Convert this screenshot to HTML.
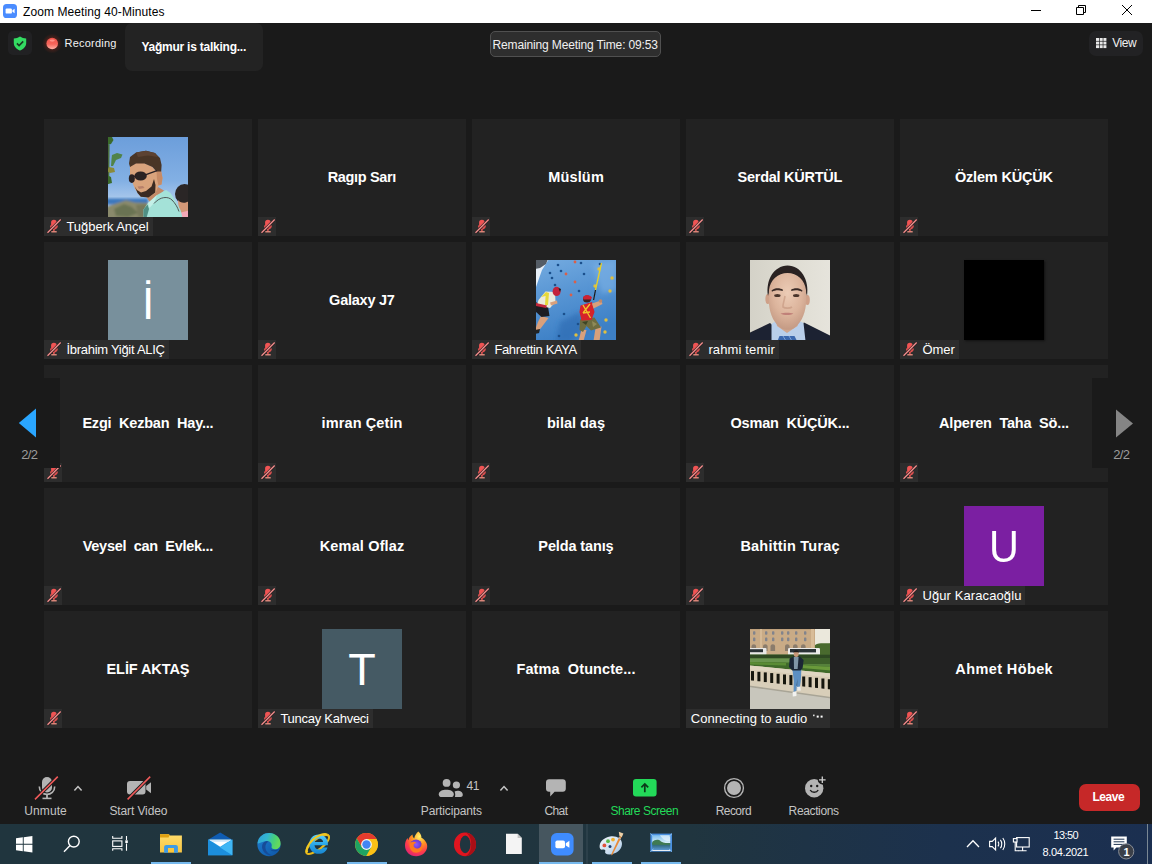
<!DOCTYPE html>
<html lang="tr"><head><meta charset="utf-8"><title>Zoom Meeting 40-Minutes</title>
<style>
html,body{margin:0;padding:0;background:#1a1a1a;}
body{width:1152px;height:864px;position:relative;overflow:hidden;font-family:"Liberation Sans",sans-serif;}
.t{position:absolute;white-space:pre;margin:0;padding:0;}
.a{position:absolute;}
.tile{position:absolute;width:208px;height:117px;background:#222;}
.lab{position:absolute;height:19.5px;background:#2d2d2d;}
svg{position:absolute;overflow:visible;}
</style></head><body>
<div class="a" style="left:0;top:0;width:1152px;height:23px;background:#fff"></div>
<svg style="left:3px;top:4px" width="14" height="14" viewBox="0 0 14 14"><rect width="14" height="14" rx="3.6" fill="#4a8cff"/><rect x="2.6" y="4.4" width="6.3" height="5.2" rx="1.2" fill="#fff"/><path d="M9.4 6.3 L11.6 4.7 V9.3 L9.4 7.7Z" fill="#fff"/></svg>
<div class="t" style="left:23.00px;top:5px;font-size:12px;line-height:14px;color:#000;letter-spacing:0.096px;">Zoom Meeting 40-Minutes</div>
<svg style="left:1020px;top:0" width="132" height="23" viewBox="0 0 132 23" fill="none" stroke="#000" stroke-width="1">
<path d="M11 10.5H21"/>
<path d="M56.5 7.5h7v7h-7zM58.5 7.5v-2h7v7h-2"/>
<path d="M102 5L112 15M112 5L102 15"/></svg>
<div class="a" style="left:8px;top:31px;width:24px;height:24px;border-radius:5px;background:#212123"></div>
<svg style="left:13px;top:36px" width="14" height="15" viewBox="0 0 14 15"><path d="M7 0.6 C5.2 1.9 3 2.5 0.8 2.6 V7 C0.8 10.6 3.5 13.2 7 14.4 C10.5 13.2 13.2 10.6 13.2 7 V2.6 C11 2.5 8.8 1.9 7 0.6Z" fill="#33db62"/><path d="M3.9 7.4 L6.1 9.6 L10.2 5.4" fill="none" stroke="#1a3a22" stroke-width="1.6"/></svg>
<svg style="left:40px;top:31px" width="24" height="24" viewBox="0 0 24 24"><defs><radialGradient id="rg" cx="50%" cy="50%" r="50%"><stop offset="0" stop-color="#c0392b" stop-opacity=".55"/><stop offset=".6" stop-color="#8a2a1c" stop-opacity=".35"/><stop offset="1" stop-color="#8a2a1c" stop-opacity="0"/></radialGradient><linearGradient id="rd" x1="0" y1="0" x2="0" y2="1"><stop offset="0" stop-color="#f0524a"/><stop offset=".55" stop-color="#f5655a"/><stop offset="1" stop-color="#ffb4a8"/></linearGradient></defs><circle cx="12.2" cy="12.5" r="10" fill="url(#rg)"/><circle cx="12.2" cy="12.5" r="5.8" fill="url(#rd)"/><ellipse cx="12.2" cy="9.6" rx="2.6" ry="1.1" fill="#ff9d92" opacity=".8"/></svg>
<div class="t" style="left:64.60px;top:37px;font-size:11px;line-height:12px;color:#f2f2f2;letter-spacing:0.207px;">Recording</div>
<div class="a" style="left:125px;top:23px;width:138px;height:48px;border-radius:7px;background:#232323"></div>
<div class="t" style="left:141.40px;top:40px;font-size:12px;line-height:14px;font-weight:bold;color:#fff;letter-spacing:-0.235px;">Yağmur is talking...</div>
<div class="a" style="left:490px;top:31px;width:169px;height:24px;border:1px solid #505050;border-radius:5px;background:#2e2e2e"></div>
<div class="t" style="left:492.50px;top:38px;font-size:12px;line-height:14px;color:#f0f0f0;letter-spacing:-0.140px;">Remaining Meeting Time: 09:53</div>
<div class="a" style="left:1089px;top:31px;width:54px;height:25px;border-radius:7px;background:#222224"></div>
<svg style="left:1095.6px;top:38px" width="11" height="11" viewBox="0 0 11 11"><rect x="0.0" y="0.0" width="3" height="2.9" fill="#e8e8e8"/><rect x="3.7" y="0.0" width="3" height="2.9" fill="#e8e8e8"/><rect x="7.4" y="0.0" width="3" height="2.9" fill="#e8e8e8"/><rect x="0.0" y="3.6" width="3" height="2.9" fill="#e8e8e8"/><rect x="3.7" y="3.6" width="3" height="2.9" fill="#e8e8e8"/><rect x="7.4" y="3.6" width="3" height="2.9" fill="#e8e8e8"/><rect x="0.0" y="7.2" width="3" height="2.9" fill="#e8e8e8"/><rect x="3.7" y="7.2" width="3" height="2.9" fill="#e8e8e8"/><rect x="7.4" y="7.2" width="3" height="2.9" fill="#e8e8e8"/></svg>
<div class="t" style="left:1112.30px;top:36px;font-size:12px;line-height:14px;color:#f0f0f0;letter-spacing:-0.498px;">View</div>
<div class="tile" style="left:44px;top:119px"></div>
<svg style="left:108px;top:137px" width="80" height="80" viewBox="0 0 80 80"><defs><filter id="b1" x="-5%" y="-5%" width="110%" height="110%"><feGaussianBlur stdDeviation="0.55"/></filter><filter id="b1b" x="-5%" y="-5%" width="110%" height="110%"><feGaussianBlur stdDeviation="1.2"/></filter><linearGradient id="sky1" x1="0" y1="0" x2="0" y2="1"><stop offset="0" stop-color="#6c9edb"/><stop offset=".55" stop-color="#83b0e4"/><stop offset=".78" stop-color="#a9c8ec"/><stop offset="1" stop-color="#a9c8ec"/></linearGradient><clipPath id="c1"><rect width="80" height="80"/></clipPath></defs><g clip-path="url(#c1)"><rect width="80" height="80" fill="url(#sky1)"/><g filter="url(#b1b)"><rect x="-2" y="61.5" width="42" height="6" fill="#3d78bd"/><path d="M-2 70 L8 66.5 L18 63.2 L27 65.4 L40 66 V82 H-2Z" fill="#8a8a6c"/><path d="M6 72 L16 67 L24 70 L30 76 L20 80 L8 79Z" fill="#6b7352"/><path d="M28 68 L38 67 L38 80 L30 80Z" fill="#77795c"/></g><g filter="url(#b1)"><path d="M-1 0 H4 L5.5 3 L3 7 L0 8Z" fill="#3b6b2c"/><path d="M1.6 8 L1.2 47 L0 47 L0 8Z" fill="#4a6a3a"/><path d="M4 18 L9 16 L14.5 17.5 L13 21 L8 23 L5 29 L3 29 L3.5 22Z" fill="#4d8038" opacity=".9"/><path d="M1 30 L6 31 L7 35 L2 36 L-1 34Z" fill="#8a8a3a"/><path d="M-1 38 L3 40 L4 46 L0 47Z" fill="#3b6b2c"/><ellipse cx="76.5" cy="57" rx="9.5" ry="10" fill="#2b2525"/><path d="M70 63 C72 66 77 67 81 64 V76 H73 C71 72 70 68 70 63Z" fill="#d39878"/><path d="M73 75.5 L81 73.5 V81 H74Z" fill="#f3a9b8"/><path d="M37 58 L50 50 L56 53.5 L43 67Z" fill="#c48a68"/><path d="M35.5 81 V72.5 L40 66 L49 58 L58 53 L62.5 56 L67 63 L72.5 73 L74.5 81Z" fill="#a4e2d8"/><path d="M35.5 81 V72.5 L39.5 67.5 L41 72 L38.5 81Z" fill="#4f8f84"/><path d="M40 66 L49 58 L46 66 L41.5 71Z" fill="#c4f0e8"/><path d="M46 66.5 C52 59.5 60 59 64 63 C67 66 69.5 70 71 74.5" fill="none" stroke="#4f5a5a" stroke-width="1"/><path d="M22 29 L28 26 L36 26 L44 29.5 L48 34 L53 34 L54.5 41 L53.5 47.5 L50.5 48.5 L47.5 56 L40.5 60.5 L32.5 59.5 L27 52 L24 44.5 L22 38Z" fill="#d9a37c"/><path d="M48.5 34 L53.2 34 L54.5 41 L53.5 47.5 L50.5 48.5 L49 42Z" fill="#c68b66"/><path d="M21 26.5 L22 20 L28 15.5 L38 13.8 L47 16 L52 21 L53.6 28 L53.2 34.5 L48.5 34.5 L44.5 30 L36.5 26.5 L28 26.5 L22 30Z" fill="#4a3527"/><path d="M28 15.5 L38 13.8 L47 16 L50 20 L40 18.5 L30 20Z" fill="#5c4230"/><path d="M26.8 49.5 L29 53 L33 55.5 L38 54 L43.5 49.5 L46 42 L47.5 48 L47.2 55.5 L40.5 60.5 L32.8 59.8 L29.5 56Z" fill="#3a2a20"/><path d="M29.5 49.5 L35 49 L36.5 51 L31 52Z" fill="#b8806a"/><ellipse cx="23.8" cy="41.6" rx="3" ry="4.4" fill="#2a2024"/><ellipse cx="32.6" cy="39" rx="6.2" ry="4.6" fill="#2a2024"/><path d="M38 37.6 L49 33.6" stroke="#2a2024" stroke-width="1.5"/><path d="M26 39.6 L27.4 39" stroke="#2a2024" stroke-width="1.2"/></g></g></svg>
<div class="lab" style="left:44px;top:216.5px;width:108.6px"></div>
<svg style="left:44.4px;top:216.6px" width="18" height="19" viewBox="0 0 18 19"><rect x="7.1" y="2.7" width="5.6" height="8.6" rx="2.8" fill="#f05454"/><path d="M6.5 8.4 C6.5 13.4 13.3 13.4 13.3 8.4" fill="none" stroke="#f05454" stroke-width="1.1"/><path d="M9.9 12 V14.3" stroke="#f05454" stroke-width="1.4"/><path d="M7.3 14.8 H12.7" stroke="#ff9a8a" stroke-width="1.2"/><path d="M3.4 16 L16.8 2.4" stroke="#2a2020" stroke-width="2.6"/><path d="M3.5 15.7 L16.7 2.5" stroke="#f69090" stroke-width="1.25"/></svg>
<div class="t" style="left:66.40px;top:219px;font-size:13px;line-height:15px;color:#fff;letter-spacing:-0.035px;">Tuğberk Ançel</div>
<div class="tile" style="left:258px;top:119px"></div>
<div class="t" style="left:327.65px;top:169px;font-size:14.5px;line-height:16px;font-weight:bold;color:#fff;letter-spacing:-0.335px;">Ragıp Sarı</div>
<div class="lab" style="left:258px;top:216.5px;width:18px"></div>
<svg style="left:258.4px;top:216.6px" width="18" height="19" viewBox="0 0 18 19"><rect x="7.1" y="2.7" width="5.6" height="8.6" rx="2.8" fill="#f05454"/><path d="M6.5 8.4 C6.5 13.4 13.3 13.4 13.3 8.4" fill="none" stroke="#f05454" stroke-width="1.1"/><path d="M9.9 12 V14.3" stroke="#f05454" stroke-width="1.4"/><path d="M7.3 14.8 H12.7" stroke="#ff9a8a" stroke-width="1.2"/><path d="M3.4 16 L16.8 2.4" stroke="#2a2020" stroke-width="2.6"/><path d="M3.5 15.7 L16.7 2.5" stroke="#f69090" stroke-width="1.25"/></svg>
<div class="tile" style="left:472px;top:119px"></div>
<div class="t" style="left:548.20px;top:169px;font-size:14.5px;line-height:16px;font-weight:bold;color:#fff;letter-spacing:0.164px;">Müslüm</div>
<div class="lab" style="left:472px;top:216.5px;width:18px"></div>
<svg style="left:472.4px;top:216.6px" width="18" height="19" viewBox="0 0 18 19"><rect x="7.1" y="2.7" width="5.6" height="8.6" rx="2.8" fill="#f05454"/><path d="M6.5 8.4 C6.5 13.4 13.3 13.4 13.3 8.4" fill="none" stroke="#f05454" stroke-width="1.1"/><path d="M9.9 12 V14.3" stroke="#f05454" stroke-width="1.4"/><path d="M7.3 14.8 H12.7" stroke="#ff9a8a" stroke-width="1.2"/><path d="M3.4 16 L16.8 2.4" stroke="#2a2020" stroke-width="2.6"/><path d="M3.5 15.7 L16.7 2.5" stroke="#f69090" stroke-width="1.25"/></svg>
<div class="tile" style="left:686px;top:119px"></div>
<div class="t" style="left:737.55px;top:169px;font-size:14.5px;line-height:16px;font-weight:bold;color:#fff;letter-spacing:-0.255px;">Serdal KÜRTÜL</div>
<div class="lab" style="left:686px;top:216.5px;width:18px"></div>
<svg style="left:686.4px;top:216.6px" width="18" height="19" viewBox="0 0 18 19"><rect x="7.1" y="2.7" width="5.6" height="8.6" rx="2.8" fill="#f05454"/><path d="M6.5 8.4 C6.5 13.4 13.3 13.4 13.3 8.4" fill="none" stroke="#f05454" stroke-width="1.1"/><path d="M9.9 12 V14.3" stroke="#f05454" stroke-width="1.4"/><path d="M7.3 14.8 H12.7" stroke="#ff9a8a" stroke-width="1.2"/><path d="M3.4 16 L16.8 2.4" stroke="#2a2020" stroke-width="2.6"/><path d="M3.5 15.7 L16.7 2.5" stroke="#f69090" stroke-width="1.25"/></svg>
<div class="tile" style="left:900px;top:119px"></div>
<div class="t" style="left:954.90px;top:169px;font-size:14.5px;line-height:16px;font-weight:bold;color:#fff;letter-spacing:-0.170px;">Özlem KÜÇÜK</div>
<div class="lab" style="left:900px;top:216.5px;width:18px"></div>
<svg style="left:900.4px;top:216.6px" width="18" height="19" viewBox="0 0 18 19"><rect x="7.1" y="2.7" width="5.6" height="8.6" rx="2.8" fill="#f05454"/><path d="M6.5 8.4 C6.5 13.4 13.3 13.4 13.3 8.4" fill="none" stroke="#f05454" stroke-width="1.1"/><path d="M9.9 12 V14.3" stroke="#f05454" stroke-width="1.4"/><path d="M7.3 14.8 H12.7" stroke="#ff9a8a" stroke-width="1.2"/><path d="M3.4 16 L16.8 2.4" stroke="#2a2020" stroke-width="2.6"/><path d="M3.5 15.7 L16.7 2.5" stroke="#f69090" stroke-width="1.25"/></svg>
<div class="tile" style="left:44px;top:242px"></div>
<div class="a" style="left:108px;top:260px;width:80px;height:80px;background:#78909c"></div>
<div class="t" style="left:108px;top:280.3px;width:80px;text-align:center;font-size:44px;line-height:48px;color:#fff">İ</div>
<div class="lab" style="left:44px;top:339.5px;width:125.0px"></div>
<svg style="left:44.4px;top:339.6px" width="18" height="19" viewBox="0 0 18 19"><rect x="7.1" y="2.7" width="5.6" height="8.6" rx="2.8" fill="#f05454"/><path d="M6.5 8.4 C6.5 13.4 13.3 13.4 13.3 8.4" fill="none" stroke="#f05454" stroke-width="1.1"/><path d="M9.9 12 V14.3" stroke="#f05454" stroke-width="1.4"/><path d="M7.3 14.8 H12.7" stroke="#ff9a8a" stroke-width="1.2"/><path d="M3.4 16 L16.8 2.4" stroke="#2a2020" stroke-width="2.6"/><path d="M3.5 15.7 L16.7 2.5" stroke="#f69090" stroke-width="1.25"/></svg>
<div class="t" style="left:66.40px;top:342px;font-size:13px;line-height:15px;color:#fff;letter-spacing:-0.278px;">İbrahim Yiğit ALIÇ</div>
<div class="tile" style="left:258px;top:242px"></div>
<div class="t" style="left:329.10px;top:292px;font-size:14.5px;line-height:16px;font-weight:bold;color:#fff;letter-spacing:-0.240px;">Galaxy J7</div>
<div class="lab" style="left:258px;top:339.5px;width:18px"></div>
<svg style="left:258.4px;top:339.6px" width="18" height="19" viewBox="0 0 18 19"><rect x="7.1" y="2.7" width="5.6" height="8.6" rx="2.8" fill="#f05454"/><path d="M6.5 8.4 C6.5 13.4 13.3 13.4 13.3 8.4" fill="none" stroke="#f05454" stroke-width="1.1"/><path d="M9.9 12 V14.3" stroke="#f05454" stroke-width="1.4"/><path d="M7.3 14.8 H12.7" stroke="#ff9a8a" stroke-width="1.2"/><path d="M3.4 16 L16.8 2.4" stroke="#2a2020" stroke-width="2.6"/><path d="M3.5 15.7 L16.7 2.5" stroke="#f69090" stroke-width="1.25"/></svg>
<div class="tile" style="left:472px;top:242px"></div>
<svg style="left:536px;top:260px" width="80" height="80" viewBox="0 0 80 80"><defs><filter id="b2" x="-5%" y="-5%" width="110%" height="110%"><feGaussianBlur stdDeviation="0.5"/></filter><filter id="b2b" x="-5%" y="-5%" width="110%" height="110%"><feGaussianBlur stdDeviation="2.5"/></filter><linearGradient id="w2" x1="0" y1="0" x2=".3" y2="1"><stop offset="0" stop-color="#74abe0"/><stop offset=".5" stop-color="#5694d3"/><stop offset="1" stop-color="#3d80c6"/></linearGradient><clipPath id="c2"><rect width="80" height="80"/></clipPath></defs><g clip-path="url(#c2)"><rect width="80" height="80" fill="url(#w2)"/><g filter="url(#b2b)"><path d="M24 62 L44 52 L48 70 L34 82 L20 82Z" fill="#2f6cb4" opacity=".7"/><path d="M56 4 L80 0 L80 30 L66 34Z" fill="#7db3e6" opacity=".6"/></g><g filter="url(#b2)"><path d="M-1 -1 H13 L6 10 L0 27 H-1Z" fill="#e8f0f8"/><path d="M-1 -1 H12 L10 4 L4 8 L-1 9Z" fill="#555d66"/><circle cx="45" cy="3" r="1.3" fill="#1f4f8c"/><circle cx="22" cy="5" r="1.3" fill="#1f4f8c"/><circle cx="25" cy="11" r="1.3" fill="#1f4f8c"/><circle cx="48" cy="14" r="1.3" fill="#1f4f8c"/><circle cx="14" cy="13" r="1.3" fill="#1f4f8c"/><circle cx="16" cy="18" r="1.3" fill="#1f4f8c"/><circle cx="43" cy="31" r="1.3" fill="#1f4f8c"/><circle cx="28" cy="54" r="1.3" fill="#1f4f8c"/><circle cx="23" cy="76" r="1.3" fill="#1f4f8c"/><circle cx="42" cy="64" r="1.3" fill="#1f4f8c"/><circle cx="19" cy="25" r="1.3" fill="#1f4f8c"/><circle cx="64" cy="4" r="1.3" fill="#1f4f8c"/><circle cx="39" cy="2" r="1.4" fill="#d9604a"/><circle cx="30" cy="14" r="1.4" fill="#d9604a"/><circle cx="39" cy="22" r="1.4" fill="#d9604a"/><circle cx="35" cy="35" r="1.4" fill="#d9604a"/><circle cx="76" cy="18" r="1.7" fill="#e0c040"/><circle cx="74" cy="31" r="1.7" fill="#e0c040"/><circle cx="59" cy="26" r="1.7" fill="#e0c040"/><circle cx="63" cy="9" r="1.7" fill="#e0c040"/><circle cx="70" cy="60" r="1.7" fill="#e0c040"/><circle cx="69" cy="72" r="1.7" fill="#e0c040"/><circle cx="40" cy="75" r="1.7" fill="#e0c040"/><path d="M65.5 3 L59.5 30" stroke="#e6d02a" stroke-width="1.3"/><path d="M59.5 30 L57.6 40" stroke="#1a1a1a" stroke-width="1.2"/><path d="M5 56 L12.5 58 L5 68 L1 72 L-1 70 L2 62Z" fill="#d8a07c"/><path d="M-1 70 L4 69 L3 73 L-1 74Z" fill="#222"/><path d="M-1 42 L12 46.5 L13.5 56 L5.5 57 L-1 51Z" fill="#1c1c20"/><path d="M2.5 40 L9.5 31.5 L19 32 L19.5 42 L14 48 L1 45Z" fill="#eceadc"/><path d="M5 37 L10 32 L13 33 L12 45 L9 45 L9.6 36Z" fill="#e6d83a"/><path d="M0 43 L11 45.5 L10 48 L0 46Z" fill="#c2283a"/><path d="M14 42.5 L21 40.5 L21.5 43.5 L15 45.5Z" fill="#d8a07c"/><ellipse cx="20.6" cy="31.4" rx="4" ry="4.6" fill="#c4243a"/><path d="M22.5 28 L25 29 L24 32Z" fill="#1a1a1a"/><path d="M45.5 69.5 L50.5 70 L47.5 81 L42.5 81Z" fill="#d8a07c"/><path d="M59.5 68 L65.5 66.5 L63.5 81 L57.5 81Z" fill="#d8a07c"/><path d="M44 59.5 L58.5 57.5 L65 67.5 L55 70.5 L50.5 66 L47 72 L43.5 70Z" fill="#6d6c40"/><path d="M46 62 L52 61 L50 65Z" fill="#3e4426"/><path d="M56 61 L61 64 L57 67Z" fill="#8f8a58"/><path d="M44.5 45.5 L56 42 L58.5 52 L55.5 60 L45.5 60.5 L43.5 52Z" fill="#d6202a"/><path d="M47 45 L54.5 58 M54 44 L47 53 M47 53 L54 52" stroke="#f0c22a" stroke-width="1.4" fill="none"/><path d="M56 43.5 L65 40.5 L66.5 44 L57.5 48.5Z" fill="#d8a07c"/><circle cx="64.5" cy="41" r="1.8" fill="#c08868"/><ellipse cx="51" cy="39" rx="4" ry="3.6" fill="#3a2420"/><path d="M47 37.5 C48 34 54 34 56 37.5 L55 39.5 L47.5 39.5Z" fill="#cc2236"/></g></g></svg>
<div class="lab" style="left:472px;top:339.5px;width:109.3px"></div>
<svg style="left:472.4px;top:339.6px" width="18" height="19" viewBox="0 0 18 19"><rect x="7.1" y="2.7" width="5.6" height="8.6" rx="2.8" fill="#f05454"/><path d="M6.5 8.4 C6.5 13.4 13.3 13.4 13.3 8.4" fill="none" stroke="#f05454" stroke-width="1.1"/><path d="M9.9 12 V14.3" stroke="#f05454" stroke-width="1.4"/><path d="M7.3 14.8 H12.7" stroke="#ff9a8a" stroke-width="1.2"/><path d="M3.4 16 L16.8 2.4" stroke="#2a2020" stroke-width="2.6"/><path d="M3.5 15.7 L16.7 2.5" stroke="#f69090" stroke-width="1.25"/></svg>
<div class="t" style="left:494.40px;top:342px;font-size:13px;line-height:15px;color:#fff;letter-spacing:-0.367px;">Fahrettin KAYA</div>
<div class="tile" style="left:686px;top:242px"></div>
<svg style="left:750px;top:260px" width="80" height="80" viewBox="0 0 80 80"><defs><filter id="b3" x="-5%" y="-5%" width="110%" height="110%"><feGaussianBlur stdDeviation="0.7"/></filter><filter id="b3b" x="-5%" y="-5%" width="110%" height="110%"><feGaussianBlur stdDeviation="2"/></filter><linearGradient id="bg3" x1="0" y1="0" x2="1" y2="0"><stop offset="0" stop-color="#d4d2c8"/><stop offset=".5" stop-color="#dedcd2"/><stop offset="1" stop-color="#e6e4dc"/></linearGradient><radialGradient id="sk3" cx="50%" cy="35%" r="65%"><stop offset="0" stop-color="#ecccb6"/><stop offset=".6" stop-color="#dcb49c"/><stop offset="1" stop-color="#c49a84"/></radialGradient><clipPath id="c3"><rect width="80" height="80"/></clipPath></defs><g clip-path="url(#c3)"><rect width="80" height="80" fill="url(#bg3)"/><g filter="url(#b3)"><path d="M-1 73 L20 63 L28 70 L37 80 L46 70 L54 62.5 L81 76 V81 H-1Z" fill="#1d2130"/><path d="M21.5 64 L27 60 L37 72 L47.5 60 L53.5 63 L55.5 81 H21.5Z" fill="#b9cfea"/><path d="M29.5 76 L44.5 76 L47 81 H27.5Z" fill="#3b68ae"/><path d="M33 76 L36 81 M39 76 L42 81" stroke="#7fa4d8" stroke-width="1"/><path d="M25 56 L49 56 L47.5 66 L37 73 L27 66Z" fill="#cfa68e"/><ellipse cx="17.8" cy="39" rx="2.4" ry="5" fill="#cfa088"/><ellipse cx="57.4" cy="40" rx="2.4" ry="5" fill="#cfa088"/><path d="M18 36 C15.5 20 24 6 37.5 5.6 C51 5.6 59.5 20 57 36 L55 30 C54 20 47 14 37.5 14 C28 14 21 20 20 30Z" fill="#2a2424"/><path d="M19 30 C20 20 28 13 37.5 13 C47 13 55 20 56 30 C57 44 55.5 54 50 62 C46 68 41.5 69.8 37.5 69.8 C33.5 69.8 29 68 25 62 C19.5 54 18 44 19 30Z" fill="url(#sk3)"/><path d="M21.5 30.4 C25 27.6 30 27.8 33 29.8 L32.6 31 C29 29.8 25 30 22 31.8Z" fill="#3a2c28"/><path d="M41 29.8 C44 27.8 49 27.6 52.5 30.4 L52 31.8 C49 30 45 29.8 41.4 31Z" fill="#3a2c28"/><ellipse cx="27.4" cy="35.4" rx="3.2" ry="1.5" fill="#4a342c"/><ellipse cx="46.2" cy="35.4" rx="3.2" ry="1.5" fill="#4a342c"/><path d="M35 36 C34 42 32.5 45 33 47 C35 48.5 40 48.5 42 47" fill="none" stroke="#c09078" stroke-width="1.6" opacity=".55"/><path d="M30.5 53.6 C34 52.4 40 52.4 43.5 53.6 C40 55.6 34 55.6 30.5 53.6Z" fill="#c08078"/></g></g></svg>
<div class="lab" style="left:686px;top:339.5px;width:92.8px"></div>
<svg style="left:686.4px;top:339.6px" width="18" height="19" viewBox="0 0 18 19"><rect x="7.1" y="2.7" width="5.6" height="8.6" rx="2.8" fill="#f05454"/><path d="M6.5 8.4 C6.5 13.4 13.3 13.4 13.3 8.4" fill="none" stroke="#f05454" stroke-width="1.1"/><path d="M9.9 12 V14.3" stroke="#f05454" stroke-width="1.4"/><path d="M7.3 14.8 H12.7" stroke="#ff9a8a" stroke-width="1.2"/><path d="M3.4 16 L16.8 2.4" stroke="#2a2020" stroke-width="2.6"/><path d="M3.5 15.7 L16.7 2.5" stroke="#f69090" stroke-width="1.25"/></svg>
<div class="t" style="left:708.40px;top:342px;font-size:13px;line-height:15px;color:#fff;letter-spacing:0.139px;">rahmi temir</div>
<div class="tile" style="left:900px;top:242px"></div>
<div class="a" style="left:964px;top:260px;width:80px;height:80px;background:#000;box-shadow:1px 1px 2px rgba(0,0,0,.5)"></div>
<div class="lab" style="left:900px;top:339.5px;width:58.9px"></div>
<svg style="left:900.4px;top:339.6px" width="18" height="19" viewBox="0 0 18 19"><rect x="7.1" y="2.7" width="5.6" height="8.6" rx="2.8" fill="#f05454"/><path d="M6.5 8.4 C6.5 13.4 13.3 13.4 13.3 8.4" fill="none" stroke="#f05454" stroke-width="1.1"/><path d="M9.9 12 V14.3" stroke="#f05454" stroke-width="1.4"/><path d="M7.3 14.8 H12.7" stroke="#ff9a8a" stroke-width="1.2"/><path d="M3.4 16 L16.8 2.4" stroke="#2a2020" stroke-width="2.6"/><path d="M3.5 15.7 L16.7 2.5" stroke="#f69090" stroke-width="1.25"/></svg>
<div class="t" style="left:922.40px;top:342px;font-size:13px;line-height:15px;color:#fff;letter-spacing:-0.000px;">Ömer</div>
<div class="tile" style="left:44px;top:365px"></div>
<div class="t" style="left:82.40px;top:415px;font-size:14.5px;line-height:16px;font-weight:bold;color:#fff;letter-spacing:-0.205px;">Ezgi  Kezban  Hay...</div>
<div class="lab" style="left:44px;top:462.5px;width:18px"></div>
<svg style="left:44.4px;top:462.6px" width="18" height="19" viewBox="0 0 18 19"><rect x="7.1" y="2.7" width="5.6" height="8.6" rx="2.8" fill="#f05454"/><path d="M6.5 8.4 C6.5 13.4 13.3 13.4 13.3 8.4" fill="none" stroke="#f05454" stroke-width="1.1"/><path d="M9.9 12 V14.3" stroke="#f05454" stroke-width="1.4"/><path d="M7.3 14.8 H12.7" stroke="#ff9a8a" stroke-width="1.2"/><path d="M3.4 16 L16.8 2.4" stroke="#2a2020" stroke-width="2.6"/><path d="M3.5 15.7 L16.7 2.5" stroke="#f69090" stroke-width="1.25"/></svg>
<div class="tile" style="left:258px;top:365px"></div>
<div class="t" style="left:321.55px;top:415px;font-size:14.5px;line-height:16px;font-weight:bold;color:#fff;letter-spacing:0.114px;">imran Çetin</div>
<div class="lab" style="left:258px;top:462.5px;width:18px"></div>
<svg style="left:258.4px;top:462.6px" width="18" height="19" viewBox="0 0 18 19"><rect x="7.1" y="2.7" width="5.6" height="8.6" rx="2.8" fill="#f05454"/><path d="M6.5 8.4 C6.5 13.4 13.3 13.4 13.3 8.4" fill="none" stroke="#f05454" stroke-width="1.1"/><path d="M9.9 12 V14.3" stroke="#f05454" stroke-width="1.4"/><path d="M7.3 14.8 H12.7" stroke="#ff9a8a" stroke-width="1.2"/><path d="M3.4 16 L16.8 2.4" stroke="#2a2020" stroke-width="2.6"/><path d="M3.5 15.7 L16.7 2.5" stroke="#f69090" stroke-width="1.25"/></svg>
<div class="tile" style="left:472px;top:365px"></div>
<div class="t" style="left:547.00px;top:415px;font-size:14.5px;line-height:16px;font-weight:bold;color:#fff;letter-spacing:-0.003px;">bilal daş</div>
<div class="lab" style="left:472px;top:462.5px;width:18px"></div>
<svg style="left:472.4px;top:462.6px" width="18" height="19" viewBox="0 0 18 19"><rect x="7.1" y="2.7" width="5.6" height="8.6" rx="2.8" fill="#f05454"/><path d="M6.5 8.4 C6.5 13.4 13.3 13.4 13.3 8.4" fill="none" stroke="#f05454" stroke-width="1.1"/><path d="M9.9 12 V14.3" stroke="#f05454" stroke-width="1.4"/><path d="M7.3 14.8 H12.7" stroke="#ff9a8a" stroke-width="1.2"/><path d="M3.4 16 L16.8 2.4" stroke="#2a2020" stroke-width="2.6"/><path d="M3.5 15.7 L16.7 2.5" stroke="#f69090" stroke-width="1.25"/></svg>
<div class="tile" style="left:686px;top:365px"></div>
<div class="t" style="left:730.50px;top:415px;font-size:14.5px;line-height:16px;font-weight:bold;color:#fff;letter-spacing:-0.190px;">Osman  KÜÇÜK...</div>
<div class="lab" style="left:686px;top:462.5px;width:18px"></div>
<svg style="left:686.4px;top:462.6px" width="18" height="19" viewBox="0 0 18 19"><rect x="7.1" y="2.7" width="5.6" height="8.6" rx="2.8" fill="#f05454"/><path d="M6.5 8.4 C6.5 13.4 13.3 13.4 13.3 8.4" fill="none" stroke="#f05454" stroke-width="1.1"/><path d="M9.9 12 V14.3" stroke="#f05454" stroke-width="1.4"/><path d="M7.3 14.8 H12.7" stroke="#ff9a8a" stroke-width="1.2"/><path d="M3.4 16 L16.8 2.4" stroke="#2a2020" stroke-width="2.6"/><path d="M3.5 15.7 L16.7 2.5" stroke="#f69090" stroke-width="1.25"/></svg>
<div class="tile" style="left:900px;top:365px"></div>
<div class="t" style="left:939.00px;top:415px;font-size:14.5px;line-height:16px;font-weight:bold;color:#fff;letter-spacing:-0.183px;">Alperen  Taha  Sö...</div>
<div class="lab" style="left:900px;top:462.5px;width:18px"></div>
<svg style="left:900.4px;top:462.6px" width="18" height="19" viewBox="0 0 18 19"><rect x="7.1" y="2.7" width="5.6" height="8.6" rx="2.8" fill="#f05454"/><path d="M6.5 8.4 C6.5 13.4 13.3 13.4 13.3 8.4" fill="none" stroke="#f05454" stroke-width="1.1"/><path d="M9.9 12 V14.3" stroke="#f05454" stroke-width="1.4"/><path d="M7.3 14.8 H12.7" stroke="#ff9a8a" stroke-width="1.2"/><path d="M3.4 16 L16.8 2.4" stroke="#2a2020" stroke-width="2.6"/><path d="M3.5 15.7 L16.7 2.5" stroke="#f69090" stroke-width="1.25"/></svg>
<div class="tile" style="left:44px;top:488px"></div>
<div class="t" style="left:82.75px;top:538px;font-size:14.5px;line-height:16px;font-weight:bold;color:#fff;letter-spacing:-0.287px;">Veysel  can  Evlek...</div>
<div class="lab" style="left:44px;top:585.5px;width:18px"></div>
<svg style="left:44.4px;top:585.6px" width="18" height="19" viewBox="0 0 18 19"><rect x="7.1" y="2.7" width="5.6" height="8.6" rx="2.8" fill="#f05454"/><path d="M6.5 8.4 C6.5 13.4 13.3 13.4 13.3 8.4" fill="none" stroke="#f05454" stroke-width="1.1"/><path d="M9.9 12 V14.3" stroke="#f05454" stroke-width="1.4"/><path d="M7.3 14.8 H12.7" stroke="#ff9a8a" stroke-width="1.2"/><path d="M3.4 16 L16.8 2.4" stroke="#2a2020" stroke-width="2.6"/><path d="M3.5 15.7 L16.7 2.5" stroke="#f69090" stroke-width="1.25"/></svg>
<div class="tile" style="left:258px;top:488px"></div>
<div class="t" style="left:319.75px;top:538px;font-size:14.5px;line-height:16px;font-weight:bold;color:#fff;letter-spacing:0.150px;">Kemal Oflaz</div>
<div class="lab" style="left:258px;top:585.5px;width:18px"></div>
<svg style="left:258.4px;top:585.6px" width="18" height="19" viewBox="0 0 18 19"><rect x="7.1" y="2.7" width="5.6" height="8.6" rx="2.8" fill="#f05454"/><path d="M6.5 8.4 C6.5 13.4 13.3 13.4 13.3 8.4" fill="none" stroke="#f05454" stroke-width="1.1"/><path d="M9.9 12 V14.3" stroke="#f05454" stroke-width="1.4"/><path d="M7.3 14.8 H12.7" stroke="#ff9a8a" stroke-width="1.2"/><path d="M3.4 16 L16.8 2.4" stroke="#2a2020" stroke-width="2.6"/><path d="M3.5 15.7 L16.7 2.5" stroke="#f69090" stroke-width="1.25"/></svg>
<div class="tile" style="left:472px;top:488px"></div>
<div class="t" style="left:538.35px;top:538px;font-size:14.5px;line-height:16px;font-weight:bold;color:#fff;letter-spacing:-0.126px;">Pelda tanış</div>
<div class="lab" style="left:472px;top:585.5px;width:18px"></div>
<svg style="left:472.4px;top:585.6px" width="18" height="19" viewBox="0 0 18 19"><rect x="7.1" y="2.7" width="5.6" height="8.6" rx="2.8" fill="#f05454"/><path d="M6.5 8.4 C6.5 13.4 13.3 13.4 13.3 8.4" fill="none" stroke="#f05454" stroke-width="1.1"/><path d="M9.9 12 V14.3" stroke="#f05454" stroke-width="1.4"/><path d="M7.3 14.8 H12.7" stroke="#ff9a8a" stroke-width="1.2"/><path d="M3.4 16 L16.8 2.4" stroke="#2a2020" stroke-width="2.6"/><path d="M3.5 15.7 L16.7 2.5" stroke="#f69090" stroke-width="1.25"/></svg>
<div class="tile" style="left:686px;top:488px"></div>
<div class="t" style="left:740.40px;top:538px;font-size:14.5px;line-height:16px;font-weight:bold;color:#fff;letter-spacing:0.215px;">Bahittin Turaç</div>
<div class="lab" style="left:686px;top:585.5px;width:18px"></div>
<svg style="left:686.4px;top:585.6px" width="18" height="19" viewBox="0 0 18 19"><rect x="7.1" y="2.7" width="5.6" height="8.6" rx="2.8" fill="#f05454"/><path d="M6.5 8.4 C6.5 13.4 13.3 13.4 13.3 8.4" fill="none" stroke="#f05454" stroke-width="1.1"/><path d="M9.9 12 V14.3" stroke="#f05454" stroke-width="1.4"/><path d="M7.3 14.8 H12.7" stroke="#ff9a8a" stroke-width="1.2"/><path d="M3.4 16 L16.8 2.4" stroke="#2a2020" stroke-width="2.6"/><path d="M3.5 15.7 L16.7 2.5" stroke="#f69090" stroke-width="1.25"/></svg>
<div class="tile" style="left:900px;top:488px"></div>
<div class="a" style="left:964px;top:506px;width:80px;height:80px;background:#7b1fa2"></div>
<div class="t" style="left:964px;top:522.5px;width:80px;text-align:center;font-size:45px;line-height:48px;color:#fff;transform:scaleX(.92)">U</div>
<div class="lab" style="left:900px;top:585.5px;width:125.4px"></div>
<svg style="left:900.4px;top:585.6px" width="18" height="19" viewBox="0 0 18 19"><rect x="7.1" y="2.7" width="5.6" height="8.6" rx="2.8" fill="#f05454"/><path d="M6.5 8.4 C6.5 13.4 13.3 13.4 13.3 8.4" fill="none" stroke="#f05454" stroke-width="1.1"/><path d="M9.9 12 V14.3" stroke="#f05454" stroke-width="1.4"/><path d="M7.3 14.8 H12.7" stroke="#ff9a8a" stroke-width="1.2"/><path d="M3.4 16 L16.8 2.4" stroke="#2a2020" stroke-width="2.6"/><path d="M3.5 15.7 L16.7 2.5" stroke="#f69090" stroke-width="1.25"/></svg>
<div class="t" style="left:922.40px;top:588px;font-size:13px;line-height:15px;color:#fff;letter-spacing:0.103px;">Uğur Karacaoğlu</div>
<div class="tile" style="left:44px;top:611px"></div>
<div class="t" style="left:106.55px;top:661px;font-size:14.5px;line-height:16px;font-weight:bold;color:#fff;letter-spacing:-0.097px;">ELİF AKTAŞ</div>
<div class="lab" style="left:44px;top:708.5px;width:18px"></div>
<svg style="left:44.4px;top:708.6px" width="18" height="19" viewBox="0 0 18 19"><rect x="7.1" y="2.7" width="5.6" height="8.6" rx="2.8" fill="#f05454"/><path d="M6.5 8.4 C6.5 13.4 13.3 13.4 13.3 8.4" fill="none" stroke="#f05454" stroke-width="1.1"/><path d="M9.9 12 V14.3" stroke="#f05454" stroke-width="1.4"/><path d="M7.3 14.8 H12.7" stroke="#ff9a8a" stroke-width="1.2"/><path d="M3.4 16 L16.8 2.4" stroke="#2a2020" stroke-width="2.6"/><path d="M3.5 15.7 L16.7 2.5" stroke="#f69090" stroke-width="1.25"/></svg>
<div class="tile" style="left:258px;top:611px"></div>
<div class="a" style="left:322px;top:629px;width:80px;height:80px;background:#455a64"></div>
<div class="t" style="left:322px;top:645.5px;width:80px;text-align:center;font-size:45px;line-height:48px;color:#fff">T</div>
<div class="lab" style="left:258px;top:708.5px;width:115.0px"></div>
<svg style="left:258.4px;top:708.6px" width="18" height="19" viewBox="0 0 18 19"><rect x="7.1" y="2.7" width="5.6" height="8.6" rx="2.8" fill="#f05454"/><path d="M6.5 8.4 C6.5 13.4 13.3 13.4 13.3 8.4" fill="none" stroke="#f05454" stroke-width="1.1"/><path d="M9.9 12 V14.3" stroke="#f05454" stroke-width="1.4"/><path d="M7.3 14.8 H12.7" stroke="#ff9a8a" stroke-width="1.2"/><path d="M3.4 16 L16.8 2.4" stroke="#2a2020" stroke-width="2.6"/><path d="M3.5 15.7 L16.7 2.5" stroke="#f69090" stroke-width="1.25"/></svg>
<div class="t" style="left:280.40px;top:711px;font-size:13px;line-height:15px;color:#fff;letter-spacing:-0.262px;">Tuncay Kahveci</div>
<div class="tile" style="left:472px;top:611px"></div>
<div class="t" style="left:516.50px;top:661px;font-size:14.5px;line-height:16px;font-weight:bold;color:#fff;letter-spacing:0.086px;">Fatma  Otuncte...</div>
<div class="tile" style="left:686px;top:611px"></div>
<svg style="left:750px;top:629px" width="80" height="80" viewBox="0 0 80 80"><defs><filter id="b5" x="-5%" y="-5%" width="110%" height="110%"><feGaussianBlur stdDeviation="0.5"/></filter><clipPath id="c5"><rect width="80" height="80"/></clipPath></defs><g clip-path="url(#c5)"><rect width="80" height="80" fill="#cbc9bf"/><g filter="url(#b5)"><rect x="64" y="-1" width="17" height="20" fill="#ebe8dc"/><rect x="-1" y="-1" width="66" height="27" fill="#c9ab86"/><rect x="-1" y="-1" width="66" height="1.6" fill="#b89a78"/><rect x="10" y="-1" width="2" height="24" fill="#d6ba96"/><rect x="61" y="-1" width="3" height="24" fill="#d8bc98"/><rect x="3" y="2.2" width="2.4" height="3.6" rx=".8" fill="#82848c"/><rect x="15" y="2.2" width="2.4" height="3.6" rx=".8" fill="#82848c"/><rect x="22" y="2.2" width="2.4" height="3.6" rx=".8" fill="#82848c"/><rect x="31" y="2.2" width="2.4" height="3.6" rx=".8" fill="#82848c"/><rect x="37" y="2.2" width="2.4" height="3.6" rx=".8" fill="#82848c"/><rect x="45" y="2.2" width="2.4" height="3.6" rx=".8" fill="#82848c"/><rect x="54" y="2.2" width="2.4" height="3.6" rx=".8" fill="#82848c"/><rect x="3" y="8.6" width="2.4" height="3.6" rx=".8" fill="#82848c"/><rect x="15" y="8.6" width="2.4" height="3.6" rx=".8" fill="#82848c"/><rect x="22" y="8.6" width="2.4" height="3.6" rx=".8" fill="#82848c"/><rect x="31" y="8.6" width="2.4" height="3.6" rx=".8" fill="#82848c"/><rect x="37" y="8.6" width="2.4" height="3.6" rx=".8" fill="#82848c"/><rect x="45" y="8.6" width="2.4" height="3.6" rx=".8" fill="#82848c"/><rect x="54" y="8.6" width="2.4" height="3.6" rx=".8" fill="#82848c"/><path d="M1.5 22 V17.5 C1.5 14.5 6.1 14.5 6.1 17.5 V22Z" fill="#8a7c6c"/><path d="M13 22 V17.5 C13 14.5 17.6 14.5 17.6 17.5 V22Z" fill="#8a7c6c"/><path d="M20.5 22 V17.5 C20.5 14.5 25.1 14.5 25.1 17.5 V22Z" fill="#8a7c6c"/><path d="M35 22 V17.5 C35 14.5 39.6 14.5 39.6 17.5 V22Z" fill="#8a7c6c"/><path d="M43 22 V17.5 C43 14.5 47.6 14.5 47.6 17.5 V22Z" fill="#8a7c6c"/><path d="M51 22 V17.5 C51 14.5 55.6 14.5 55.6 17.5 V22Z" fill="#8a7c6c"/><path d="M65 16 C70 13 76 15 81 14 V28 H65Z" fill="#4a6a2e"/><rect x="-1" y="19" width="17.5" height="7" rx="1" fill="#e8e8e6"/><rect x="-1" y="20.2" width="14" height="3" fill="#2a3036"/><rect x="38" y="19" width="32" height="7.4" rx="1.2" fill="#ececea"/><rect x="40" y="20" width="26" height="3.4" fill="#2a3036"/><rect x="-1" y="25.6" width="82" height="18" fill="#56813a"/><rect x="-1" y="25.6" width="82" height="4" fill="#2e4a24"/><rect x="-1" y="29.4" width="50" height="3.6" fill="#6a9550"/><rect x="50" y="29" width="31" height="6" fill="#3c5f2a"/><path d="M-1 33 L36 34 L80 38 V46 L-1 40Z" fill="#3f6b2a"/><path d="M-1 33 L36 34 L36 36.5 L-1 35.4Z" fill="#5a8c34"/><path d="M52 36 L81 38 V41.5 L52 39Z" fill="#6a9a3a"/><path d="M-1 36.4 L81 44.6 V68 L-1 56Z" fill="#d9cdb6"/><rect x="1.0" y="42.1" width="3" height="9.5" fill="#14140f"/><rect x="7.4" y="42.8" width="3" height="9.6" fill="#14140f"/><rect x="13.8" y="43.4" width="3" height="9.8" fill="#14140f"/><rect x="20.2" y="44.1" width="3" height="9.9" fill="#14140f"/><rect x="26.6" y="44.8" width="3" height="10.0" fill="#14140f"/><rect x="33.0" y="45.5" width="3" height="10.2" fill="#14140f"/><rect x="39.4" y="46.1" width="3" height="10.3" fill="#14140f"/><rect x="45.8" y="46.8" width="3" height="10.4" fill="#14140f"/><rect x="52.2" y="47.5" width="3" height="10.5" fill="#14140f"/><rect x="58.6" y="48.2" width="3" height="10.7" fill="#14140f"/><rect x="65.0" y="48.8" width="3" height="10.8" fill="#14140f"/><rect x="71.4" y="49.5" width="3" height="10.9" fill="#14140f"/><rect x="77.8" y="50.2" width="3" height="11.1" fill="#14140f"/><path d="M-1 36.4 L81 44.6 V48.2 L-1 40.4Z" fill="#e0d6c2"/><path d="M-1 51.6 L81 60.5 V69 L-1 57.5Z" fill="#d8ceb9"/><path d="M-1 57.5 L81 69 V81 H-1Z" fill="#c8c6bc"/><path d="M-1 56.4 L81 68 V69.6 L-1 58Z" fill="#a8a496"/><path d="M42.4 40 L51.4 40 L50.8 52 L49.6 60 L47 60 L47.2 50 L46.4 62 L43.6 63 L43.8 52Z" fill="#5b8fc2"/><path d="M42.6 63 L46.6 62.4 L46.4 67 L42.8 67.6Z" fill="#f2f2f0"/><path d="M47 58 L50.4 57.6 L50.8 61.4 L47.4 61.8Z" fill="#eeeeec"/><path d="M39.6 29.6 L43.4 27.4 L50 27.6 L53.6 31 L52.6 39 L50.6 41.4 L42.4 41.4 L39 38Z" fill="#1a2836"/><path d="M43.8 28 L48.6 28 L47.6 40 L44 40Z" fill="#8096a6"/><ellipse cx="46.2" cy="25" rx="2.5" ry="3" fill="#c89878"/><path d="M43.4 24 C43.4 20.4 49 20.4 49 24 L48.4 23.2 L44 23.2Z" fill="#1e1a1a"/></g></g></svg>
<div class="lab" style="left:686px;top:708.5px;width:144.2px"></div>
<div class="t" style="left:690.80px;top:711px;font-size:13px;line-height:15px;color:#fff;letter-spacing:0.048px;">Connecting to audio</div>
<svg style="left:812px;top:709px" width="14" height="19" viewBox="0 0 14 19"><rect x="1" y="5.6" width="1.6" height="1.6" fill="#ddd"/><rect x="4.7" y="6.6" width="2" height="2" fill="#fff"/><rect x="8.6" y="6.6" width="2" height="2" fill="#fff"/></svg>
<div class="tile" style="left:900px;top:611px"></div>
<div class="t" style="left:955.35px;top:661px;font-size:14.5px;line-height:16px;font-weight:bold;color:#fff;letter-spacing:0.384px;">Ahmet Höbek</div>
<div class="lab" style="left:900px;top:708.5px;width:18px"></div>
<svg style="left:900.4px;top:708.6px" width="18" height="19" viewBox="0 0 18 19"><rect x="7.1" y="2.7" width="5.6" height="8.6" rx="2.8" fill="#f05454"/><path d="M6.5 8.4 C6.5 13.4 13.3 13.4 13.3 8.4" fill="none" stroke="#f05454" stroke-width="1.1"/><path d="M9.9 12 V14.3" stroke="#f05454" stroke-width="1.4"/><path d="M7.3 14.8 H12.7" stroke="#ff9a8a" stroke-width="1.2"/><path d="M3.4 16 L16.8 2.4" stroke="#2a2020" stroke-width="2.6"/><path d="M3.5 15.7 L16.7 2.5" stroke="#f69090" stroke-width="1.25"/></svg>
<div class="a" style="left:0;top:378px;width:60px;height:90px;background:#1a1a1a"></div>
<div class="a" style="left:1092px;top:378px;width:60px;height:90px;background:#1a1a1a"></div>
<svg style="left:0;top:378px" width="60" height="90" viewBox="0 0 60 90"><path d="M36 30.5 V59.5 L18.8 45Z" fill="#2aa6ff"/></svg>
<svg style="left:1092px;top:378px" width="60" height="90" viewBox="0 0 60 90"><path d="M24 31.5 V59.5 L41 45.5Z" fill="#858585"/></svg>
<div class="t" style="left:21.20px;top:447px;font-size:13px;line-height:15px;color:#9c9c9c;letter-spacing:-0.586px;">2/2</div>
<div class="t" style="left:1113.20px;top:447px;font-size:13px;line-height:15px;color:#9c9c9c;letter-spacing:-0.586px;">2/2</div>
<div class="t" style="left:24.30px;top:804px;font-size:12px;line-height:14px;color:#c4c4c4;letter-spacing:0.096px;">Unmute</div>
<div class="t" style="left:109.40px;top:804px;font-size:12px;line-height:14px;color:#c4c4c4;letter-spacing:-0.105px;">Start Video</div>
<div class="t" style="left:420.80px;top:804px;font-size:12px;line-height:14px;color:#c4c4c4;letter-spacing:-0.136px;">Participants</div>
<div class="t" style="left:544.50px;top:804px;font-size:12px;line-height:14px;color:#c4c4c4;letter-spacing:-0.616px;">Chat</div>
<div class="t" style="left:610.40px;top:804px;font-size:12px;line-height:14px;color:#23d959;letter-spacing:-0.471px;">Share Screen</div>
<div class="t" style="left:715.70px;top:804px;font-size:12px;line-height:14px;color:#c4c4c4;letter-spacing:-0.557px;">Record</div>
<div class="t" style="left:788.60px;top:804px;font-size:12px;line-height:14px;color:#c4c4c4;letter-spacing:-0.370px;">Reactions</div>
<svg style="left:30px;top:772px" width="32" height="32" viewBox="0 0 32 32"><rect x="12" y="5" width="10" height="15.5" rx="5" fill="#b4b4b4"/><path d="M9.3 14.5 C9.3 25 24.7 25 24.7 14.5" fill="none" stroke="#b4b4b4" stroke-width="1.6"/><path d="M17 22.5V26" stroke="#b4b4b4" stroke-width="1.8"/><path d="M12.5 26.4H21.5" stroke="#b4b4b4" stroke-width="1.6"/><path d="M4.6 27.8 L28.2 4.2" stroke="#1a1a1a" stroke-width="3.4"/><path d="M5 27.4 L27.8 4.6" stroke="#ef5a5a" stroke-width="1.5"/></svg>
<svg style="left:73px;top:784px" width="10" height="8" viewBox="0 0 10 8"><path d="M1.4 6.6 L5 2.6 L8.6 6.6" fill="none" stroke="#c4c4c4" stroke-width="1.5"/></svg>
<svg style="left:499px;top:784px" width="10" height="8" viewBox="0 0 10 8"><path d="M1.4 6.6 L5 2.6 L8.6 6.6" fill="none" stroke="#c4c4c4" stroke-width="1.5"/></svg>
<svg style="left:122px;top:772px" width="34" height="32" viewBox="0 0 34 32"><rect x="5" y="9" width="18.5" height="13.5" rx="3" fill="#b4b4b4"/><path d="M24.2 14 L29 10.3 V21.2 L24.2 17.5Z" fill="#b4b4b4"/><path d="M5.2 27.8 L28.6 4.2" stroke="#1a1a1a" stroke-width="3.4"/><path d="M5.6 27.4 L28.2 4.6" stroke="#ef5a5a" stroke-width="1.5"/></svg>
<svg style="left:438px;top:778px" width="28" height="20" viewBox="0 0 28 20"><circle cx="8.6" cy="4.9" r="3.9" fill="#b4b4b4"/><path d="M0.8 16.2 C0.8 10.4 15.8 10.4 15.8 16.2 C15.8 18.2 14.6 19 13 19 H3.6 C2 19 0.8 18.2 0.8 16.2Z" fill="#b4b4b4"/><circle cx="18.4" cy="7" r="3.6" fill="#b4b4b4"/><path d="M16.9 19 C17.4 17.6 17.4 15.6 16.6 13.6 C19.6 12 24.8 13 24.8 16.8 C24.8 18.2 23.8 19 22.6 19Z" fill="#b4b4b4"/></svg>
<div class="t" style="left:466.60px;top:779px;font-size:12px;line-height:14px;color:#c4c4c4;letter-spacing:0.000px;letter-spacing:-0.6px;">41</div>
<svg style="left:545px;top:778px" width="22" height="20" viewBox="0 0 22 20"><path d="M4 1.2 H17.8 C19.6 1.2 20.8 2.4 20.8 4.2 V10.8 C20.8 12.6 19.6 13.8 17.8 13.8 H9.6 L5.2 18.4 V13.8 H4 C2.2 13.8 1 12.6 1 10.8 V4.2 C1 2.4 2.2 1.2 4 1.2Z" fill="#b4b4b4"/></svg>
<svg style="left:633px;top:779px" width="24" height="18" viewBox="0 0 24 18"><rect width="23.6" height="17.6" rx="3" fill="#23d959"/><path d="M11.8 13.2 V5.4 M8.4 8.4 L11.8 5 L15.2 8.4" fill="none" stroke="#0b3a1a" stroke-width="1.7"/></svg>
<svg style="left:722px;top:776px" width="24" height="24" viewBox="0 0 24 24"><circle cx="12" cy="12" r="9.4" fill="none" stroke="#b4b4b4" stroke-width="1.4"/><circle cx="12" cy="12" r="7" fill="#b4b4b4"/></svg>
<svg style="left:803px;top:774px" width="26" height="26" viewBox="0 0 26 26"><circle cx="11.2" cy="14.3" r="9.2" fill="#b4b4b4"/><circle cx="19.3" cy="5.8" r="4.6" fill="#1a1a1a"/><path d="M19.3 2.5V9.1M16 5.8H22.6" stroke="#d0d0d0" stroke-width="1.3"/><circle cx="8.2" cy="12" r="1.2" fill="#1a1a1a"/><circle cx="14.2" cy="12" r="1.2" fill="#1a1a1a"/><path d="M7.2 16 C8.8 19 13.6 19 15.2 16" fill="none" stroke="#1a1a1a" stroke-width="1.4"/></svg>
<div class="a" style="left:1079px;top:784px;width:61px;height:27px;border-radius:7px;background:#c62828"></div>
<div class="t" style="left:1092.40px;top:790px;font-size:12px;line-height:14px;font-weight:bold;color:#fff;letter-spacing:-0.432px;">Leave</div>
<div class="a" style="left:0;top:824px;width:1152px;height:40px;background:linear-gradient(90deg,#20353e 0%,#20353f 60%,#1e3346 70%,#1c314d 82%,#1b2f50 100%)"></div>
<svg style="left:16px;top:836px" width="17" height="17" viewBox="0 0 17 17" fill="#fff"><path d="M0 2.3 L6.8 1.3 V7.8 H0Z M7.7 1.2 L16.4 0 V7.8 H7.7Z M0 8.7 H6.8 V15.2 L0 14.2Z M7.7 8.7 H16.4 V16.5 L7.7 15.3Z"/></svg>
<svg style="left:62px;top:834px" width="20" height="20" viewBox="0 0 20 20" fill="none" stroke="#fff" stroke-width="1.4"><circle cx="11.8" cy="7.6" r="5.4"/><path d="M8 11.6 L2 17.8"/></svg>
<svg style="left:110px;top:834px" width="19" height="18" viewBox="0 0 19 18" fill="none" stroke="#fff" stroke-width="1.1"><path d="M2.7 2 V4.3 H11.9 V2"/><rect x="2.7" y="6.9" width="9.2" height="5.5"/><path d="M2.7 16.8 V14.8 H11.9 V16.8"/><path d="M16.5 2 V5.9 M16.5 9.4 V16.8"/><rect x="15.3" y="6.3" width="2.5" height="2.7" fill="#fff" stroke="none"/></svg>
<svg style="left:159px;top:834px" width="24" height="20" viewBox="0 0 24 20"><defs><linearGradient id="fo" x1="0" y1="0" x2="0" y2="1"><stop offset="0" stop-color="#ffdc6a"/><stop offset="1" stop-color="#f7c544"/></linearGradient></defs><path d="M1 0.3 H9.9 L10.9 1.5 H22.9 V18.4 H1Z" fill="url(#fo)"/><path d="M1 0.3 H9.9 L10.5 1.2 L9.6 3.6 H1Z" fill="#e0a010"/><path d="M5.1 18.8 V13 Q5.1 10.9 7.2 10.9 H16.8 Q18.9 10.9 18.9 13 V18.8 H15 V14 H9 V18.8Z" fill="#3e9be6"/><rect x="9" y="14" width="6" height="4.4" fill="#fbc63c"/></svg>
<div class="a" style="left:151px;top:862px;width:40px;height:2px;background:#76b9ed"></div>
<svg style="left:207px;top:832px" width="26" height="24" viewBox="0 0 26 24"><path d="M1 7.8 L13.2 0.4 L25.4 7.8Z" fill="#0f5cb2"/><rect x="1" y="7.6" width="24.4" height="15.6" fill="#27a0e8"/><path d="M1 7.6 L25.4 23.2 H1Z" fill="#1c8edc"/><path d="M25.4 7.6 V23.2 L13.2 15.4Z" fill="#3fb6f5"/><path d="M2.2 7.8 H24.2 L13.2 14.8Z" fill="#fff"/><path d="M2.2 7.8 H24.2 L21 9.8 H5.4Z" fill="#cfe6f8"/></svg>
<svg style="left:256px;top:832px" width="26" height="25" viewBox="0 0 26 25"><defs><linearGradient id="eg1" x1="0" y1="0" x2="1" y2="0.25"><stop offset="0" stop-color="#2f9fdc"/><stop offset=".45" stop-color="#34b6d0"/><stop offset=".75" stop-color="#45cf7c"/><stop offset="1" stop-color="#63d95c"/></linearGradient><linearGradient id="eg2" x1="0" y1="0" x2="1" y2="1"><stop offset="0" stop-color="#1f7fd0"/><stop offset="1" stop-color="#0d55a6"/></linearGradient></defs><circle cx="13" cy="12.6" r="11.6" fill="url(#eg2)"/><path d="M1.5 11.2 C2.4 4 8.6 0.9 13.4 1 C20 1.2 24.6 6 24.6 11.4 C24.6 15 22 17.2 19 17.2 C16.6 17.2 15 16 15.6 14.4 C16.4 12.2 14.6 9 10.8 9 C6.4 9 2.6 12.4 1.5 11.2Z" fill="url(#eg1)"/><path d="M10.6 9 C6.8 9.6 5.2 13.8 6.6 17.6 C8.2 21.8 12.8 24.4 17.8 23.4 C13.6 23.4 9.4 19.6 9.4 15.2 C9.4 12.6 10.4 10.6 12.6 9.4Z" fill="#174c98"/><path d="M14.2 17.4 C16.2 20.2 21.2 20 23.6 16.8 C22 18.2 16 18.8 14.2 17.4Z" fill="#0f4a94"/></svg>
<svg style="left:304px;top:831px" width="28" height="26" viewBox="0 0 28 26"><defs><linearGradient id="ie1" x1="0" y1="0" x2="0" y2="1"><stop offset="0" stop-color="#5fd0f8"/><stop offset=".5" stop-color="#2aa8ea"/><stop offset="1" stop-color="#1a86d0"/></linearGradient></defs><ellipse cx="13.6" cy="13.4" rx="14" ry="5" transform="rotate(-38 13.6 13.4)" fill="none" stroke="#e8b818" stroke-width="2"/><path transform="translate(0.5,-1)" d="M14.2 4.6 C20 4.6 23.8 9 23.4 15.2 H10 C10.2 18 12.2 19.4 14.6 19.4 C16.6 19.4 17.8 18.6 18.4 17.4 H23 C21.8 21.4 18.6 23.8 14.4 23.8 C8.8 23.8 4.8 19.8 4.8 14.2 C4.8 8.8 8.6 4.6 14.2 4.6Z M10.1 12 H18.6 C18.4 9.8 16.8 8.4 14.4 8.4 C12 8.4 10.4 9.8 10.1 12Z" fill="url(#ie1)" fill-rule="evenodd"/><path d="M3.2 21.6 C1.6 18.6 4 13 9 8.6 C13.6 4.6 19.6 2.2 23.2 3.4" fill="none" stroke="#f2c820" stroke-width="2.1"/><path d="M23.2 3.4 C24.6 3.8 25.2 5 24.8 6.6" fill="none" stroke="#e8b818" stroke-width="1.5"/></svg>
<svg style="left:354.4px;top:831.5px" width="25" height="25" viewBox="0 0 25 25"><circle cx="12.5" cy="12.5" r="11.4" fill="#fbc116"/><path d="M2.80 6.51 A11.4 11.4 0 0 1 22.54 7.10 L12.50 7.10 L12.5 12.5 L7.82 15.20Z" fill="#e33b2e"/><path d="M22.54 7.10 A11.4 11.4 0 0 1 12.16 23.89 L17.18 15.20 L12.5 12.5 L12.50 7.10Z" fill="#fbc116"/><path d="M12.16 23.89 A11.4 11.4 0 0 1 2.80 6.51 L7.82 15.20 L12.5 12.5 L17.18 15.20Z" fill="#1ea362"/><circle cx="12.5" cy="12.5" r="5.4" fill="#f4f4f4"/><circle cx="12.5" cy="12.5" r="4.2" fill="#4285f4"/></svg>
<div class="a" style="left:347px;top:862px;width:40px;height:2px;background:#76b9ed"></div>
<svg style="left:403px;top:831px" width="26" height="26" viewBox="0 0 26 26"><defs><radialGradient id="ff1" cx="65%" cy="20%" r="90%"><stop offset="0" stop-color="#fff36b"/><stop offset=".35" stop-color="#ff9a1f"/><stop offset=".7" stop-color="#ff3d4a"/><stop offset="1" stop-color="#d9207b"/></radialGradient><radialGradient id="ff2" cx="50%" cy="40%" r="60%"><stop offset="0" stop-color="#9059ff"/><stop offset="1" stop-color="#5b2bb5"/></radialGradient></defs><path d="M15.4 0.6 C18 3.2 18.6 5.4 18.4 6.8 C21 8 24.6 11.6 24.2 16 C23.6 21.6 18.8 25.2 13.2 25.2 C6.8 25.2 2 20.4 2 14.4 C2 11.2 3 8.8 4.6 7 C4.6 8 5 8.8 5.4 9.2 C5.8 6.4 7.6 4.6 9.6 3.6 C9.4 5 10 6.6 11.2 7.4 C11.8 4.6 13.4 2.2 15.4 0.6Z" fill="url(#ff1)"/><circle cx="13" cy="14.6" r="6" fill="url(#ff2)"/><path d="M6.6 12.4 C8.6 10 12 10.4 13.6 12 C11.8 12 10.6 13 10.6 14.6 C10.6 16.6 12.6 18 15 17.4 C17.4 16.8 19 14.6 18.4 12 C20.6 15 19.6 19.6 15.6 21.2 C10.6 23 6 19.4 6.6 12.4Z" fill="#ff7a1f"/></svg>
<svg style="left:453px;top:832px" width="24" height="25" viewBox="0 0 24 25"><ellipse cx="12" cy="12.4" rx="11" ry="11.8" fill="#e0151f"/><ellipse cx="12.2" cy="12.4" rx="5.3" ry="8.8" fill="#20353f"/><path d="M12 0.6 C18 0.6 23 5.8 23 12.4 C23 19 18 24.2 12 24.2 C16 23 18.2 18 18.2 12.4 C18.2 6.8 16 1.8 12 0.6Z" fill="#a90f16"/></svg>
<svg style="left:505px;top:833px" width="18" height="22" viewBox="0 0 18 22"><path d="M1 0.8 H12.6 L16.8 5 V21 H1Z" fill="#f4f4f4"/><path d="M12.6 0.8 V5 H16.8Z" fill="#c4c4c4"/></svg>
<div class="a" style="left:539px;top:824px;width:44px;height:40px;background:#46565f"></div>
<svg style="left:551px;top:833px" width="23" height="23" viewBox="0 0 23 23"><rect width="22.6" height="22.4" rx="5.6" fill="#3f8cff"/><rect x="4.4" y="7.4" width="9.6" height="7.8" rx="1.8" fill="#fff"/><path d="M14.8 10.2 L18.4 7.8 V14.8 L14.8 12.4Z" fill="#fff"/></svg>
<div class="a" style="left:539px;top:862px;width:44px;height:2px;background:#76b9ed"></div>
<div class="a" style="left:586px;top:824px;width:2px;height:40px;background:#2c404a"></div>
<svg style="left:598px;top:831px" width="27" height="26" viewBox="0 0 27 26"><defs><linearGradient id="pl" x1="0" y1="0" x2="1" y2="1"><stop offset="0" stop-color="#eef4fa"/><stop offset=".6" stop-color="#cfe0f0"/><stop offset="1" stop-color="#9cc0e4"/></linearGradient></defs><path d="M12 5.6 C18 4.4 24.2 7.6 24 13 C23.8 19 17.6 23.4 11.4 23.4 C8 23.4 6.6 22 7.2 20.4 C7.8 18.8 6.4 18 4.8 18.6 C2.8 19.2 1.4 17.6 1.6 15 C2 10.2 6.4 6.6 12 5.6Z" fill="url(#pl)"/><circle cx="6.4" cy="14.4" r="1.9" fill="#e0503c"/><circle cx="10" cy="10.2" r="1.9" fill="#58b848"/><circle cx="15" cy="8.6" r="1.9" fill="#f0b030"/><circle cx="12" cy="15.4" r="1.5" fill="#1c3c6c"/><path d="M21.8 4.8 L23.6 6 L14.6 23.6 L13.4 24.6 L13.4 23Z" fill="#e88a38"/><path d="M20.8 0.8 L25.4 2.4 L23.8 6.2 L21.4 4.8Z" fill="#ecd0a8"/><path d="M20.6 6.6 L22.6 7.8" stroke="#b0b8c0" stroke-width="1.2"/></svg>
<div class="a" style="left:592px;top:862px;width:40px;height:2px;background:#76b9ed"></div>
<svg style="left:650px;top:833px" width="23" height="20" viewBox="0 0 23 20"><defs><linearGradient id="ph1" x1="0" y1="0" x2="0" y2="1"><stop offset="0" stop-color="#7ec0f0"/><stop offset=".5" stop-color="#d4ecf8"/><stop offset=".55" stop-color="#3f7a62"/><stop offset=".7" stop-color="#356e86"/><stop offset="1" stop-color="#5a98d0"/></linearGradient></defs><rect x="0.4" y="0.6" width="21.6" height="18" fill="#4a90e0"/><rect x="2.2" y="2.2" width="18" height="14.8" fill="url(#ph1)"/><path d="M2.2 9 C5 6.6 8 6 11 8.4 C14 10 17 10.4 20.2 10.4 V11.8 H2.2Z" fill="#3f7a52"/><path d="M10 2.2 H20.2 V8 C16 8.6 12 6 10 2.2Z" fill="#e8f4fc" opacity=".7"/><path d="M2.2 17 H20.2 V18 H2.2Z" fill="#e8eef4"/><path d="M3.4 3.4 L0.4 0.6 M19 3.4 L22 0.6 M3.4 16 L0.4 18.6 M19 16 L22 18.6" stroke="#8cc4f4" stroke-width="1"/></svg>
<div class="a" style="left:641px;top:862px;width:40px;height:2px;background:#76b9ed"></div>
<svg style="left:966px;top:839px" width="14" height="10" viewBox="0 0 14 10"><path d="M1 8 L7 1.8 L13 8" fill="none" stroke="#fff" stroke-width="1.3"/></svg>
<svg style="left:988px;top:836px" width="19" height="16" viewBox="0 0 19 16" fill="none" stroke="#fff" stroke-width="1.1"><path d="M1.6 5.4 H4.2 L7.6 2 V14 L4.2 10.6 H1.6Z"/><path d="M10 5.6 C11 6.8 11 9.2 10 10.4"/><path d="M12.4 3.8 C14.2 6 14.2 10 12.4 12.2"/><path d="M14.8 2 C17.4 5.2 17.4 10.8 14.8 14"/></svg>
<svg style="left:1012px;top:836px" width="19" height="17" viewBox="0 0 19 17" fill="none" stroke="#fff" stroke-width="1.1"><rect x="4.6" y="1.6" width="12.6" height="9.4"/><path d="M10.6 11 V14.6 M6.6 14.8 H14.6"/><rect x="1.4" y="2.6" width="3.6" height="3.4" fill="#1c3250"/><path d="M3.2 6 V14.8 H7"/></svg>
<div class="t" style="left:1053.40px;top:829px;font-size:11px;line-height:12px;color:#fff;letter-spacing:-0.557px;">13:50</div>
<div class="t" style="left:1042.40px;top:846px;font-size:11px;line-height:12px;color:#fff;letter-spacing:-0.330px;">8.04.2021</div>
<svg style="left:1110px;top:835px" width="26" height="26" viewBox="0 0 26 26"><path d="M1.2 1.4 H16.8 V12.6 H6.4 L3.6 15.6 V12.6 H1.2Z" fill="#fff"/><path d="M3.6 4.2H14.4M3.6 6.8H14.4M3.6 9.4H14.4" stroke="#1c3250" stroke-width="1"/><circle cx="16.2" cy="16.4" r="7.6" fill="#3a3f48" stroke="#8a8f98" stroke-width="1"/></svg>
<div class="t" style="left:1123.40px;top:846px;font-size:11px;line-height:12px;font-weight:bold;color:#fff;letter-spacing:0.000px;">1</div>
<div class="a" style="left:1147px;top:824px;width:1px;height:40px;background:#7a8894"></div>
</body></html>
